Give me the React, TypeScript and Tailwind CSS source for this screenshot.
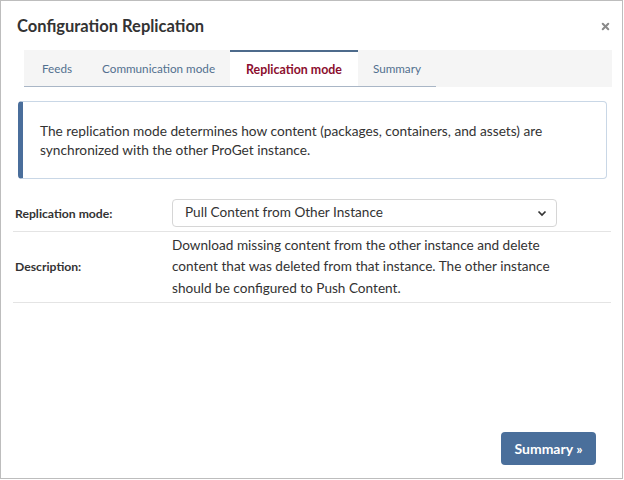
import { X } from 'lucide-react';

const tabs = ['Feeds', 'Communication mode', 'Replication mode', 'Summary'];
const active = 'Replication mode';

export default function App() {
  return (
    <div
      className="w-[623px] h-[479px] bg-white border border-[#bdbdbd] flex flex-col text-[#333]"
      style={{ fontFamily: 'Lato, "Open Sans", sans-serif' }}
    >
      {/* Header */}
      <div className="flex items-center justify-between pl-[16px] pr-[11px] pt-[12px] h-[38px]">
        <h1 className="text-[16.5px] font-bold text-[#333]">Configuration Replication</h1>
        <X size={11} strokeWidth={4.5} className="text-[#8a8a8a]" />
      </div>

      {/* Tabs */}
      <div className="ml-[23px] mt-[11px] w-[588px] h-[37px] bg-[#f5f5f5] flex">
        <div className="flex h-full pl-[3px] border-b border-[#a9b6c6]">
          {tabs.map((t) =>
            t === active ? (
              <div
                key={t}
                className="px-[16px] pt-[3px] bg-white border-t-2 border-[#4d6b8c] flex items-center text-[12.4px] font-bold text-[#8b0e2e]"
              >
                {t}
              </div>
            ) : (
              <div key={t} className="px-[15px] pt-[1px] flex items-center text-[11.7px] text-[#52708f]">
                {t}
              </div>
            )
          )}
        </div>
      </div>

      {/* Info box */}
      <div className="ml-[17px] mt-[14px] w-[589px] h-[78px] border border-[#c9d7e6] border-l-[5px] border-l-[#4a6e9b] rounded-[4px] flex items-center pl-[17px]">
        <p className="text-[13.7px] leading-[19px] text-[#333]">
          The replication mode determines how content (packages, containers, and assets) are
          <br />
          synchronized with the other ProGet instance.
        </p>
      </div>

      {/* Form */}
      <div className="ml-[12px] mt-[19px] w-[598px]">
        <div className="flex items-center h-[34px] border-b border-[#e4e4e4]">
          <div className="w-[159px] pl-[2px] text-[12.2px] font-bold">Replication mode:</div>
          <div className="w-[385px] h-[28px] mb-[4px] border border-[#d6d6d6] rounded-[4px] flex items-center justify-between pl-[12px] pr-[9px] text-[13.6px]">
            <span>Pull Content from Other Instance</span>
            <svg width="10" height="10" viewBox="0 0 10 10">
              <path d="M1.5 3.5 L5 7 L8.5 3.5" fill="none" stroke="#333" strokeWidth="1.7" />
            </svg>
          </div>
        </div>
        <div className="flex items-center h-[71px] border-b border-[#e4e4e4]">
          <div className="w-[159px] pl-[2px] text-[12.2px] font-bold">Description:</div>
          <p className="w-[385px] text-[13.6px] leading-[21.5px]">
            Download missing content from the other instance and delete
            <br />
            content that was deleted from that instance. The other instance
            <br />
            should be configured to Push Content.
          </p>
        </div>
      </div>

      <div className="flex-1" />
      <div className="flex justify-end pr-[26px] pb-[13px]">
        <button className="w-[95px] h-[33px] bg-[#4a6f9b] rounded-[4px] text-white text-[14px] font-bold">
          Summary »
        </button>
      </div>
    </div>
  );
}
